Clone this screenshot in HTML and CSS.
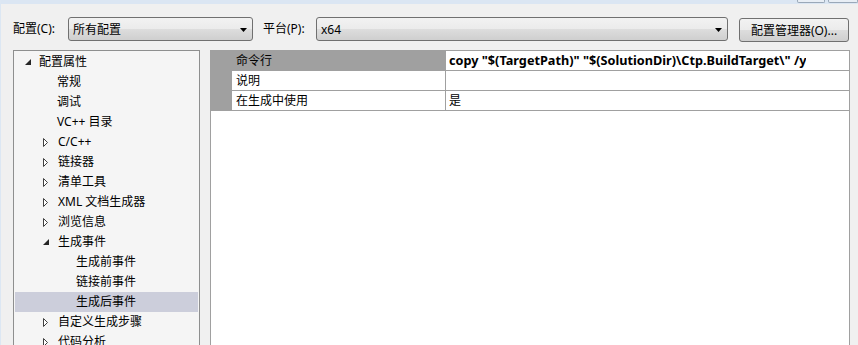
FILE: index.html
```html
<!DOCTYPE html>
<html lang="zh-CN">
<head>
    <meta charset="UTF-8">
    <title>属性页</title>
    <link rel="stylesheet" href="styles.css">
</head>
<body>
    <div class="frame">
        <div class="caption">
            <span class="cap-btn wide"></span>
            <span class="cap-btn"></span>
        </div>
        <div class="window">
            <div class="toolbar">
                <label class="lbl lbl-config">配置(C):</label>
                <div class="combo combo-config">
                    <span>所有配置</span>
                    <svg class="drop" width="7" height="4" viewBox="0 0 7 4"><polygon points="0,0 7,0 3.5,4" fill="#000"/></svg>
                </div>
                <label class="lbl lbl-platform">平台(P):</label>
                <div class="combo combo-platform">
                    <span>x64</span>
                    <svg class="drop" width="7" height="4" viewBox="0 0 7 4"><polygon points="0,0 7,0 3.5,4" fill="#000"/></svg>
                </div>
                <button class="btn">配置管理器(O)...</button>
            </div>

            <div class="main">
                <div class="tree">
                    <div class="node lv0"><svg class="exp" width="6" height="6" viewBox="0 0 6 6"><polygon points="6,0 6,6 0,6" fill="#262626"/></svg>配置属性</div>
                    <div class="node lv1 leaf">常规</div>
                    <div class="node lv1 leaf">调试</div>
                    <div class="node lv1 leaf">VC++ 目录</div>
                    <div class="node lv1"><svg class="col" width="5" height="9" viewBox="0 0 5 9"><polygon points="0.5,0.5 4.5,4.5 0.5,8.5" fill="#fff" stroke="#404040"/></svg>C/C++</div>
                    <div class="node lv1"><svg class="col" width="5" height="9" viewBox="0 0 5 9"><polygon points="0.5,0.5 4.5,4.5 0.5,8.5" fill="#fff" stroke="#404040"/></svg>链接器</div>
                    <div class="node lv1"><svg class="col" width="5" height="9" viewBox="0 0 5 9"><polygon points="0.5,0.5 4.5,4.5 0.5,8.5" fill="#fff" stroke="#404040"/></svg>清单工具</div>
                    <div class="node lv1"><svg class="col" width="5" height="9" viewBox="0 0 5 9"><polygon points="0.5,0.5 4.5,4.5 0.5,8.5" fill="#fff" stroke="#404040"/></svg>XML 文档生成器</div>
                    <div class="node lv1"><svg class="col" width="5" height="9" viewBox="0 0 5 9"><polygon points="0.5,0.5 4.5,4.5 0.5,8.5" fill="#fff" stroke="#404040"/></svg>浏览信息</div>
                    <div class="node lv1"><svg class="exp" width="6" height="6" viewBox="0 0 6 6"><polygon points="6,0 6,6 0,6" fill="#262626"/></svg>生成事件</div>
                    <div class="node lv2">生成前事件</div>
                    <div class="node lv2">链接前事件</div>
                    <div class="node lv2 selected">生成后事件</div>
                    <div class="node lv1"><svg class="col" width="5" height="9" viewBox="0 0 5 9"><polygon points="0.5,0.5 4.5,4.5 0.5,8.5" fill="#fff" stroke="#404040"/></svg>自定义生成步骤</div>
                    <div class="node lv1"><svg class="col" width="5" height="9" viewBox="0 0 5 9"><polygon points="0.5,0.5 4.5,4.5 0.5,8.5" fill="#fff" stroke="#404040"/></svg>代码分析</div>
                </div>

                <div class="grid">
                    <div class="row active">
                        <div class="margin"></div>
                        <div class="name">命令行</div>
                        <div class="value bold">copy "$(TargetPath)" "$(SolutionDir)\Ctp.BuildTarget\" /y</div>
                    </div>
                    <div class="row">
                        <div class="margin"></div>
                        <div class="name">说明</div>
                        <div class="value"></div>
                    </div>
                    <div class="row">
                        <div class="margin"></div>
                        <div class="name">在生成中使用</div>
                        <div class="value">是</div>
                    </div>
                </div>
            </div>
        </div>
    </div>
</body>
</html>
```

FILE: styles.css
```css
body {
    margin: 0;
    width: 858px;
    height: 345px;
    overflow: hidden;
    background-color: #f0f0f0;
    font-family: "Noto Sans", "Noto Sans CJK SC", sans-serif;
    font-size: 12px;
    color: #000;
}

.frame {
    height: 345px;
    border-left: 1px solid #dce7f3;
    box-sizing: border-box;
}

.caption {
    height: 4px;
    background-color: #dbe6f3;
    display: flex;
    justify-content: flex-end;
}

.cap-btn {
    width: 28px;
    height: 2px;
    border: 1px solid #9aa8b8;
    border-top: none;
    border-radius: 0 0 2px 2px;
    margin-left: 3px;
    background-color: #e8eef5;
}

.cap-btn.wide {
    width: 26px;
}

.window {
    height: 341px;
}

/* top row with configuration pickers */
.toolbar {
    display: flex;
    align-items: center;
    height: 24px;
    padding: 13px 0 0 12px;
}

.toolbar > * {
    flex: none;
}

.lbl {
    line-height: 24px;
}

.lbl-config {
    width: 55px;
}

.lbl-platform {
    width: 53px;
    margin-left: 10px;
}

.combo {
    height: 22px;
    border: 1px solid #707070;
    border-radius: 3px;
    background: linear-gradient(#f2f2f2, #ebebeb 50%, #dddddd 51%, #cfcfcf);
    display: flex;
    align-items: center;
    justify-content: space-between;
    padding: 0 5px 0 4px;
}

.combo-config {
    width: 174px;
}

.combo-platform {
    width: 401px;
}

.drop {
    margin-top: 1px;
}

.btn {
    margin-left: 11px;
    width: 110px;
    height: 24px;
    border: 1px solid #707070;
    border-radius: 3px;
    background: linear-gradient(#f2f2f2, #ebebeb 50%, #dddddd 51%, #cfcfcf);
    font-family: "Noto Sans", "Noto Sans CJK SC", sans-serif;
    font-size: 12px;
    color: #000;
    padding: 0;
    margin-top: 1px;
}

/* tree and property grid */
.main {
    display: flex;
    gap: 10px;
    margin-top: 9px;
    padding-left: 12px;
    height: 295px;
}

.tree {
    width: 183px;
    flex: none;
    border: 1px solid #8e8f8f;
    border-bottom: none;
    background-color: #f5f5f5;
    padding: 1px 1px 0 1px;
    overflow: hidden;
}

.node {
    height: 20px;
    line-height: 20px;
    display: flex;
    align-items: center;
    white-space: nowrap;
}

.node svg {
    flex: none;
}

.lv0 {
    padding-left: 10px;
}

.lv0 .exp {
    margin-right: 8px;
    margin-top: -1px;
}

.lv1 {
    padding-left: 28px;
}

.lv1.leaf {
    padding-left: 42px;
}

.lv1 .col {
    margin-right: 10px;
}

.lv1 .exp {
    margin-right: 9px;
    margin-top: -1px;
}

.lv2 {
    padding-left: 61px;
}

.selected {
    background-color: #cccedb;
}

.grid {
    width: 638px;
    flex: none;
    border: 1px solid #a0a0a0;
    border-bottom: none;
    background-color: #fff;
}

.row {
    display: flex;
    height: 19px;
    border-bottom: 1px solid #a0a0a0;
    line-height: 19px;
}

.margin {
    width: 21px;
    background-color: #a0a0a0;
    flex: none;
}

.name {
    width: 209px;
    padding-left: 4px;
    border-right: 1px solid #a0a0a0;
    flex: none;
}

.row.active .name {
    background-color: #a0a0a0;
}

.value {
    padding-left: 3px;
    white-space: nowrap;
    overflow: hidden;
}

.bold {
    font-weight: bold;
    font-size: 12.7px;
}
```
